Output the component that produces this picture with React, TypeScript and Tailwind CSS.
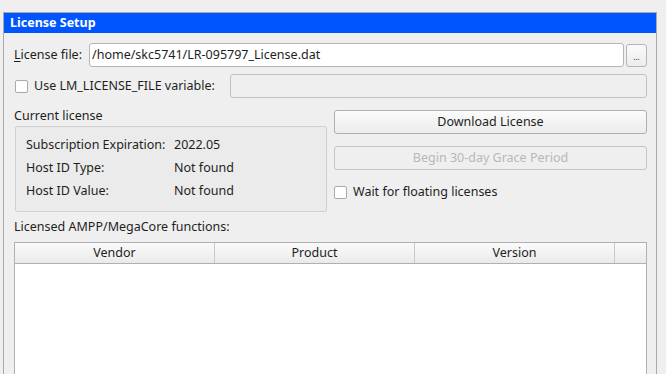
export default function App() {
  const font = { fontFamily: '"Noto Sans", sans-serif' };
  return (
    <div className="w-[666px] h-[374px] overflow-hidden bg-[#efefef] pt-[12px] pl-[3px] pr-[9px] text-[12.5px] text-[#1e1e1e]" style={font}>
      <div className="h-[400px] border border-[#a9a9a9] border-b-0 flex flex-col">
        <div className="h-[20px] bg-[#0055ff] text-white font-bold pl-[6px] leading-[20px] text-[12.5px]">License Setup</div>
        <div className="pl-[10px] pr-[9px] flex flex-col">
          <div className="mt-[10px] flex items-center h-[24px]">
            <div className="w-[75px]"><span className="underline underline-offset-2">L</span>icense file:</div>
            <div className="flex-1 h-[24px] bg-white border border-[#b5b5b5] rounded-[3px] pl-[2px] leading-[22px]">/home/skc5741/LR-095797_License.dat</div>
            <div className="ml-[2px] w-[21px] h-[23px] border border-[#b5b5b5] rounded-[3px] bg-gradient-to-b from-[#fbfbfb] to-[#ececec] flex items-end justify-center pb-[5px]">
              <span className="text-[8px] leading-[8px] tracking-[0px]">...</span>
            </div>
          </div>
          <div className="mt-[7px] flex items-center h-[24px]">
            <div className="ml-[1px] w-[13px] h-[13px] bg-white border border-[#a9a9a9] rounded-[2px]" />
            <div className="ml-[6px] w-[196px]">Use LM_LICENSE_FILE variable:</div>
            <div className="flex-1 h-[24px] border border-[#c2c2c2] rounded-[3px] bg-[#efefef]" />
          </div>
          <div className="mt-[8px] flex">
            <div className="w-[313px] flex flex-col">
              <div className="h-[20px] leading-[20px]">Current license</div>
              <div className="ml-[1px] h-[86px] border border-[#d0d0d0] rounded-[2px] bg-[#ebebeb] pl-[10px] pt-[7px]">
                <div className="flex h-[23px] items-center"><div className="w-[148px]">Subscription Expiration:</div><div>2022.05</div></div>
                <div className="flex h-[23px] items-center"><div className="w-[148px]">Host ID Type:</div><div>Not found</div></div>
                <div className="flex h-[23px] items-center"><div className="w-[148px]">Host ID Value:</div><div>Not found</div></div>
              </div>
            </div>
            <div className="ml-[7px] flex-1 flex flex-col pt-[4px]">
              <div className="h-[24px] border border-[#b0b0b0] rounded-[3px] bg-gradient-to-b from-[#fbfbfb] to-[#ececec] flex items-center justify-center">Download License</div>
              <div className="mt-[12px] h-[24px] border border-[#c4c4c4] rounded-[3px] bg-[#efefef] flex items-center justify-center text-[#b8b8b8]">Begin 30-day Grace Period</div>
              <div className="mt-[16px] flex items-center h-[13px]">
                <div className="w-[13px] h-[13px] bg-white border border-[#a9a9a9] rounded-[2px]" />
                <div className="ml-[6px]">Wait for floating licenses</div>
              </div>
            </div>
          </div>
          <div className="mt-[5px] h-[20px] leading-[20px]">Licensed AMPP/MegaCore functions:</div>
          <div className="mt-[5px] h-[200px] border border-[#b0b0b0] border-b-0 bg-white">
            <div className="flex h-[21px] border-b border-[#b0b0b0] bg-gradient-to-b from-[#fbfbfb] to-[#eaeaea]">
              <div className="w-[200px] border-r border-[#c8c8c8] flex items-center justify-center">Vendor</div>
              <div className="w-[200px] border-r border-[#c8c8c8] flex items-center justify-center">Product</div>
              <div className="w-[200px] border-r border-[#c8c8c8] flex items-center justify-center">Version</div>
              <div className="flex-1" />
            </div>
          </div>
        </div>
      </div>
    </div>
  );
}
